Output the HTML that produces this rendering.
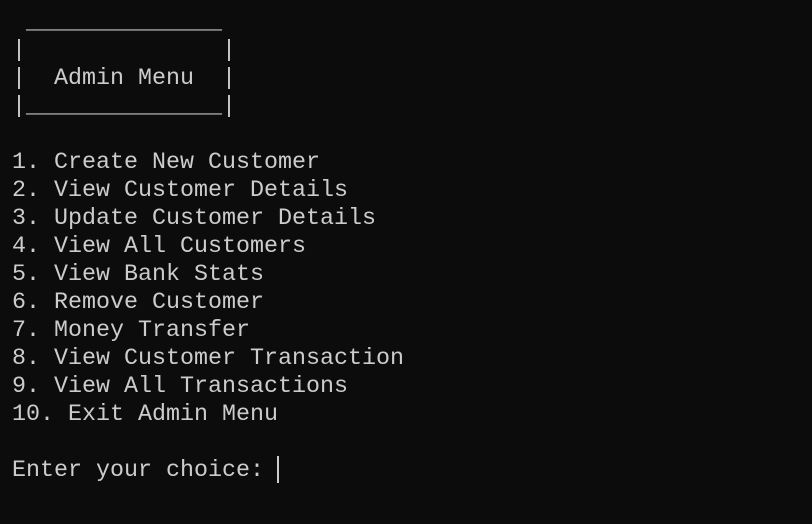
<!DOCTYPE html>
<html><head><meta charset="utf-8"><style>
html,body{margin:0;padding:0;background:#0c0c0c;width:812px;height:524px;overflow:hidden}
pre{margin:0;position:absolute;left:12px;top:9px;font-family:"Liberation Mono",monospace;font-size:23.33px;line-height:28px;color:#cccccc;letter-spacing:0}
.cur{position:absolute;left:277px;top:456px;width:2px;height:27px;background:#cccccc}
</style></head><body>
<pre> ______________
|              |
|  Admin Menu  |
|______________|

1. Create New Customer
2. View Customer Details
3. Update Customer Details
4. View All Customers
5. View Bank Stats
6. Remove Customer
7. Money Transfer
8. View Customer Transaction
9. View All Transactions
10. Exit Admin Menu

Enter your choice: </pre>
<div class="cur"></div>
</body></html>
